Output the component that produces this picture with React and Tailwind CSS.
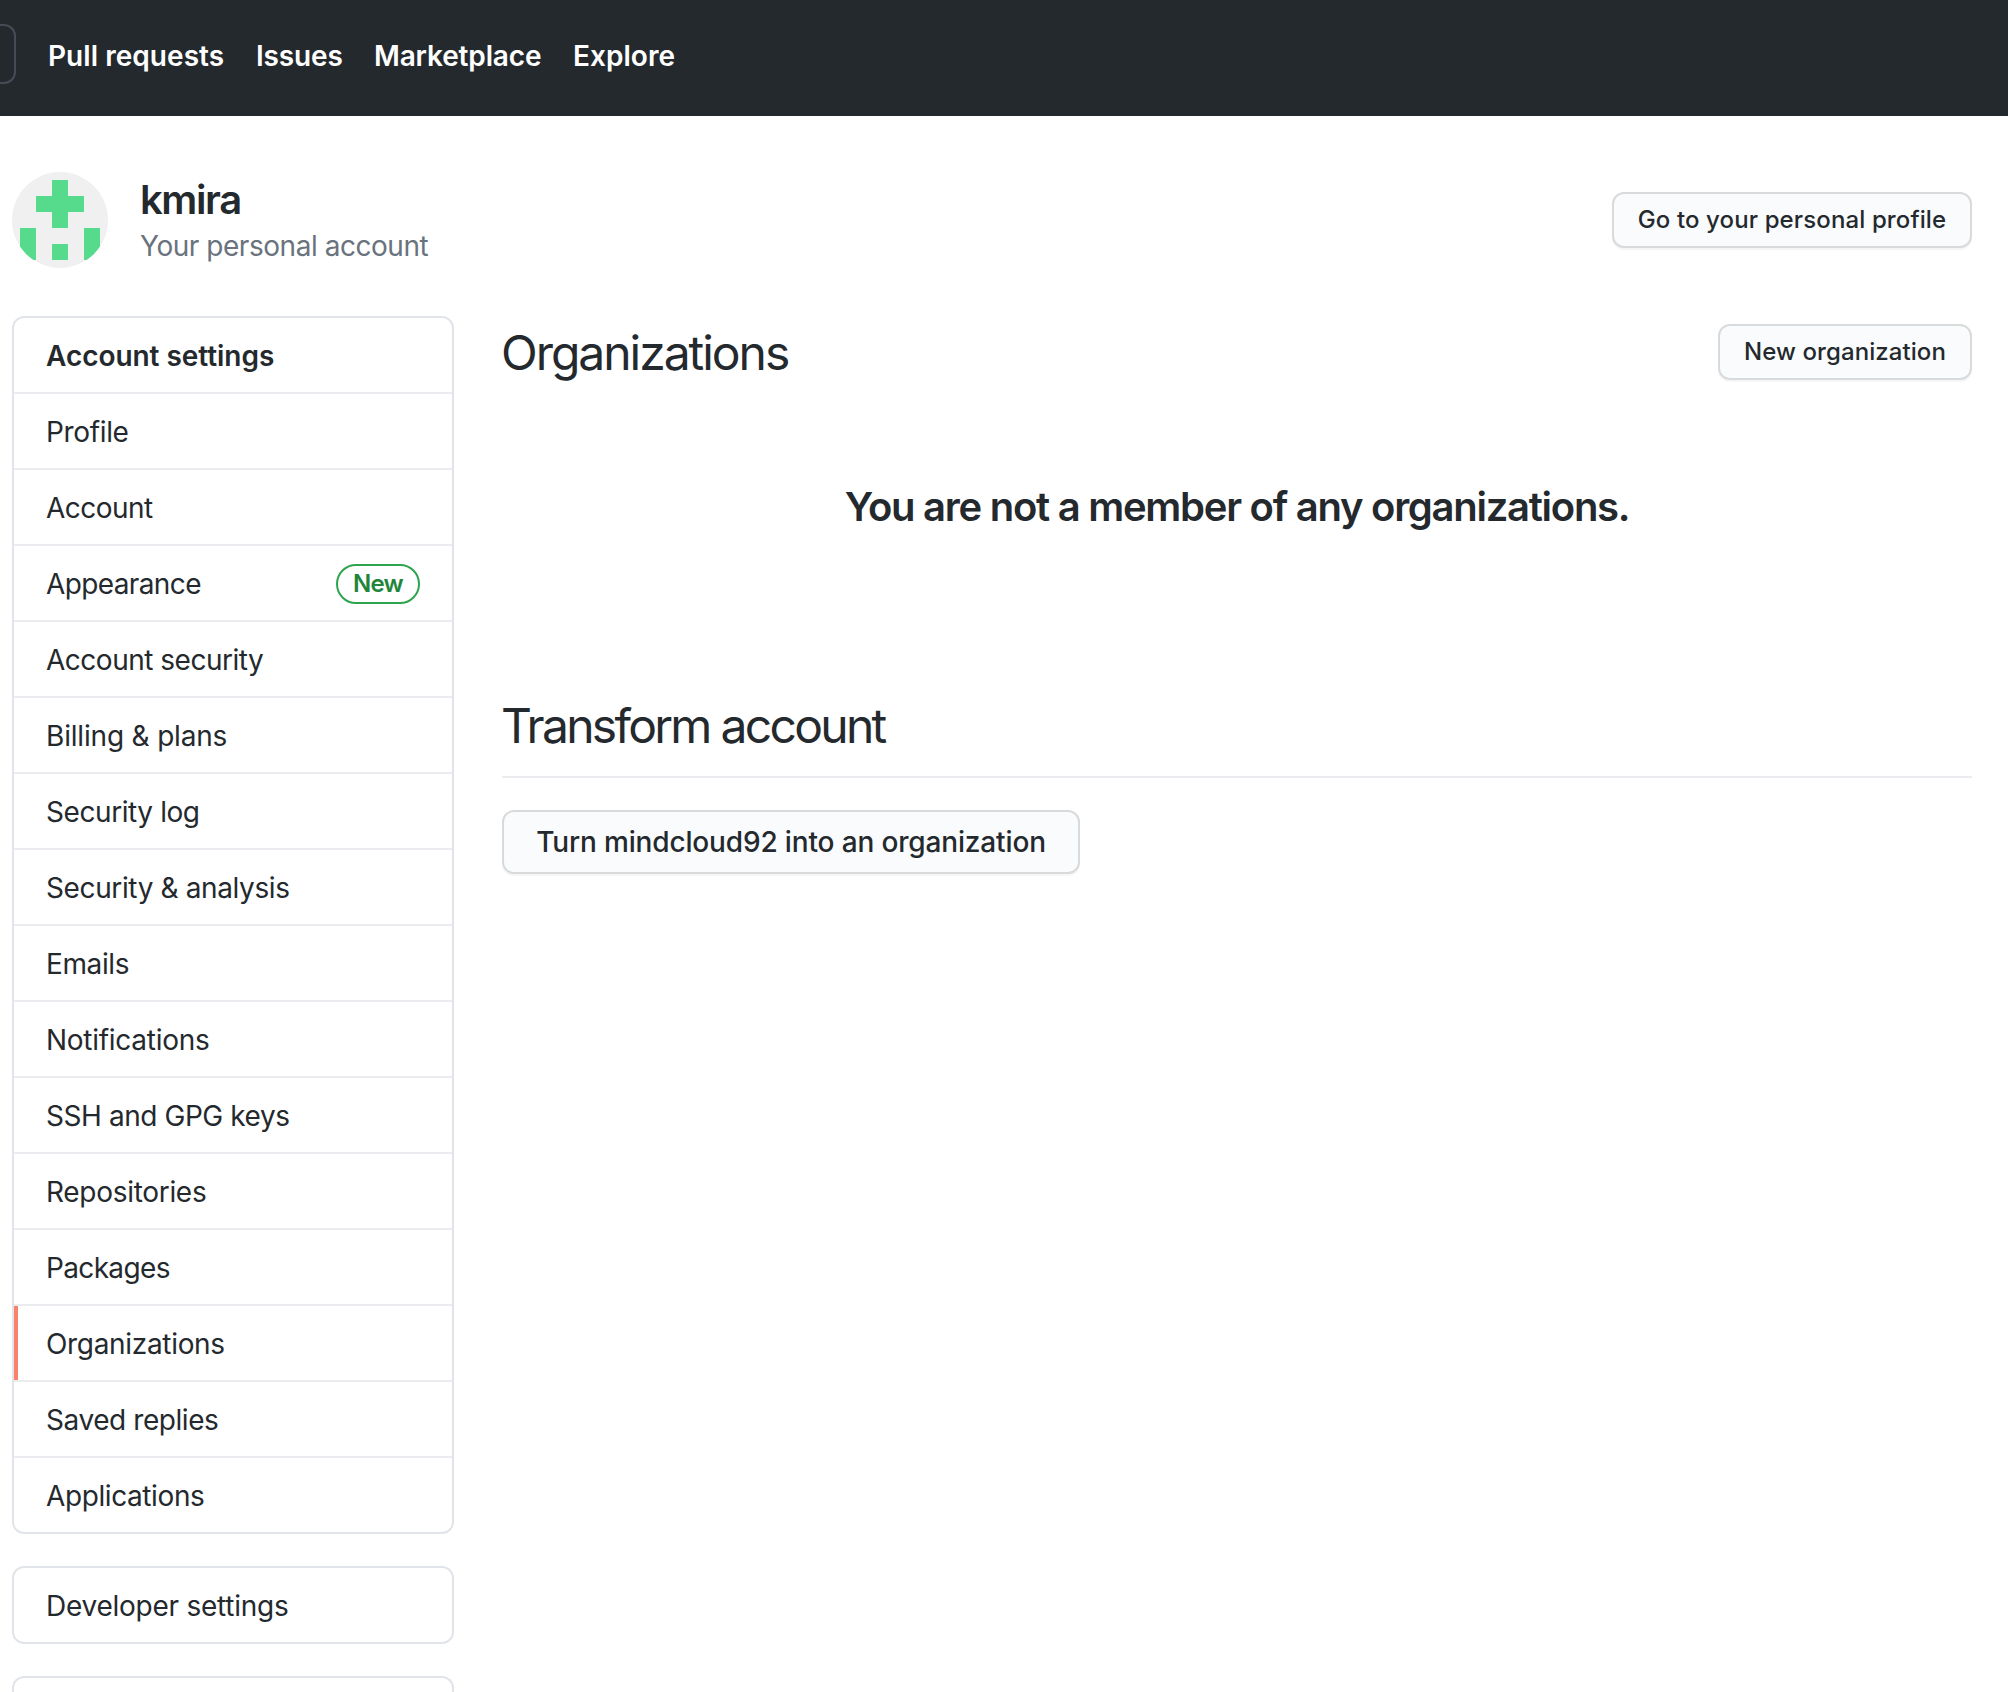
const NAV = [
  { label: "Pull requests", cls: "w-[176px] tracking-[0.05px]" },
  { label: "Issues", cls: "w-[86px] tracking-[-0.14px]" },
  { label: "Marketplace", cls: "w-[167px] tracking-[-0.15px]" },
  { label: "Explore", cls: "tracking-[0.03px]" },
];

const MENU = [
  { label: "Profile", cls: "tracking-[-0.35px]" },
  { label: "Account", cls: "tracking-[-0.55px]" },
  { label: "Appearance", cls: "tracking-[-0.62px]", badge: "New" },
  { label: "Account security", cls: "tracking-[-0.49px]" },
  { label: "Billing & plans", cls: "tracking-[-0.18px]" },
  { label: "Security log", cls: "tracking-[-0.42px]" },
  { label: "Security & analysis", cls: "tracking-[-0.38px]" },
  { label: "Emails", cls: "tracking-[-0.4px]" },
  { label: "Notifications", cls: "tracking-[-0.27px]" },
  { label: "SSH and GPG keys", cls: "tracking-[-0.43px]" },
  { label: "Repositories", cls: "tracking-[-0.3px]" },
  { label: "Packages", cls: "tracking-[-0.65px]" },
  { label: "Organizations", cls: "tracking-[-0.32px]", active: true },
  { label: "Saved replies", cls: "tracking-[-0.43px]" },
  { label: "Applications", cls: "tracking-[-0.4px]" },
];

function Header() {
  return (
    <header className="flex h-[116px] items-center bg-[#24292e]">
      <div className="mb-2 h-[60px] w-4 rounded-r-[12px] border-2 border-l-0 border-[#444d56]" />
      <nav className="mb-1 ml-8 flex gap-8 text-[28px] leading-[42px] font-semibold whitespace-nowrap text-white">
        {NAV.map((n) => (
          <a key={n.label} className={n.cls}>{n.label}</a>
        ))}
      </nav>
    </header>
  );
}

function Avatar() {
  return (
    <svg className="size-24 rounded-full" viewBox="0 0 96 96" shapeRendering="crispEdges">
      <rect width="96" height="96" fill="#f0f0f0" />
      <g fill="#56db8d">
        <rect x="40" y="8" width="16" height="48" />
        <rect x="24" y="24" width="48" height="16" />
        <rect x="8" y="56" width="16" height="32" />
        <rect x="40" y="72" width="16" height="16" />
        <rect x="72" y="56" width="16" height="32" />
      </g>
    </svg>
  );
}

function Button({ className, children }) {
  return (
    <button
      className={
        "shrink-0 rounded-[12px] border-2 border-[#d8dadb] bg-[#fafbfc] font-medium whitespace-nowrap shadow-[0_2px_0_rgba(27,31,35,0.04)] " +
        className
      }
    >
      {children}
    </button>
  );
}

function Sidebar() {
  return (
    <aside className="flex w-[442px] shrink-0 flex-col gap-8">
      <nav className="overflow-hidden rounded-[12px] border-2 border-[#e1e4e8]">
        <h2 className="flex h-[74px] items-center pt-0.5 pl-8 font-semibold tracking-[-0.05px]">Account settings</h2>
        {MENU.map((m) => (
          <a key={m.label} className="flex h-[76px] border-t-2 border-[#eaecef]">
            <span className={m.active ? "w-1 bg-[#f9826c]" : "w-1"} />
            <span className="flex grow items-center justify-between pt-0.5 pr-8 pl-7">
              <span className={m.cls}>{m.label}</span>
              {m.badge && (
                <span className="flex h-10 w-[84px] items-center justify-center rounded-full border-2 border-[#2ea44f] text-[24px] font-semibold tracking-[-0.8px] text-[#22863a]">
                  {m.badge}
                </span>
              )}
            </span>
          </a>
        ))}
      </nav>
      <div className="flex h-[78px] items-center rounded-[12px] border-2 border-[#e1e4e8] pt-0.5 pl-8 tracking-[-0.25px]">
        Developer settings
      </div>
      <div className="h-4 rounded-t-[12px] border-2 border-b-0 border-[#e1e4e8]" />
    </aside>
  );
}

export default function App() {
  return (
    <div className="h-[1692px] w-[2008px] overflow-hidden bg-white font-[Inter,sans-serif] text-[28px] leading-[42px] text-[#24292e]">
      <Header />
      <div className="pt-14 pr-9 pl-3">
        <div className="flex h-24 items-center">
          <Avatar />
          <div className="ml-8 grow pt-0.5">
            <h1 className="text-[40px] leading-[50px] font-semibold tracking-[-1.4px]">kmira</h1>
            <p className="tracking-[-0.46px] text-[#6a737d]">Your personal account</p>
          </div>
          <Button className="h-14 w-[360px] text-[24px] leading-[40px] tracking-[0.12px]">Go to your personal profile</Button>
        </div>
        <div className="mt-12 flex gap-12">
          <Sidebar />
          <main className="grow">
            <div className="flex items-start justify-between">
              <h2 className="-ml-px pt-px text-[48px] leading-[72px] tracking-[-2.03px]">Organizations</h2>
              <Button className="mt-2 h-14 w-[254px] text-[24px] leading-[40px] tracking-[0.08px]">New organization</Button>
            </div>
            <h3 className="mt-[88px] text-center text-[40px] leading-[60px] font-semibold tracking-[-1.27px]">
              You are not a member of any organizations.
            </h3>
            <h2 className="mt-[153px] h-[88px] border-b-2 border-[#eaecef] text-[48px] leading-[72px] tracking-[-2.7px]">
              <span className="-ml-px">Transform account</span>
            </h2>
            <Button className="mt-8 h-16 w-[578px] text-[28px] tracking-[-0.15px]">Turn mindcloud92 into an organization</Button>
          </main>
        </div>
      </div>
    </div>
  );
}
